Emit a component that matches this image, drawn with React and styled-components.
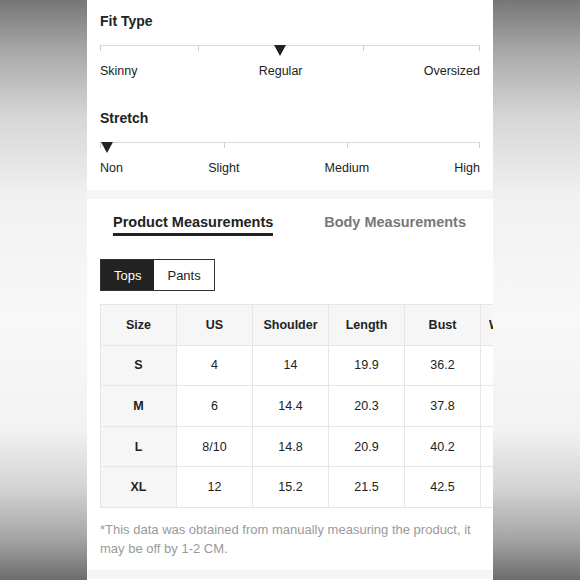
import React from "react";
import styled, { createGlobalStyle } from "styled-components";

const GlobalStyle = createGlobalStyle`
    html, body {
        margin: 0;
        padding: 0;
        height: 580px;
        overflow: hidden;
        background: linear-gradient(to bottom, #767676 0%, #a9a9a9 9%, #d6d6d6 20%, #f1f1f1 34%, #f8f8f8 55%, #f2f2f2 74%, #d4d4d4 84%, #a4a4a4 93%, #6c6c6c 100%);
        font-family: "Liberation Sans", Arial, sans-serif;
        color: #222;
    }
`

const Page = styled.div`
    width: 406px;
    height: 580px;
    margin: 0 auto;
    background: #f5f5f5;
    display: flex;
    flex-direction: column;
    gap: 9px;
    overflow: hidden;
`, Panel = styled.section`
    background: #fff;
    padding: ${p => p.$pad || "0 13px"};
    height: ${p => p.$h ? p.$h + "px" : "auto"};
    box-sizing: border-box;
    overflow: hidden;
    flex-shrink: 0;
`, Section = styled.div`
    margin-top: ${p => p.$top || 0}px;
`, Title = styled.h3`
    margin: 0;
    font-size: 14px;
    line-height: 18px;
    font-weight: bold;
    color: #222;
`, Track = styled.div`
    position: relative;
    margin-top: 15px;
    height: 17px;
    border-top: 1px solid #d9d9d9;
`, Tick = styled.span`
    position: absolute;
    top: 0;
    left: ${p => p.$left}px;
    width: 1px;
    height: 5px;
    background: #cfcfcf;
`, Pointer = styled.span`
    position: absolute;
    top: -1px;
    left: ${p => p.$left}px;
    width: 0;
    height: 0;
    border-left: 6px solid transparent;
    border-right: 6px solid transparent;
    border-top: 11px solid #222;
`, Labels = styled.div`
    display: flex;
    justify-content: space-between;
    font-size: 12.5px;
    line-height: 16px;
    color: #222;
`, Tabs = styled.div`
    display: flex;
    justify-content: space-between;
    padding: 14px 14px 0 13px;
`, Tab = styled.div`
    font-size: 14.5px;
    font-weight: bold;
    line-height: 18px;
    padding-bottom: 2px;
    color: ${p => p.$active ? "#222" : "#777"};
    border-bottom: 3px solid ${p => p.$active ? "#222" : "transparent"};
`, Toggle = styled.div`
    display: flex;
    margin-top: 23px;
    border: 1px solid #333;
    width: max-content;
`, ToggleButton = styled.div`
    height: 30px;
    padding: 0 13px;
    display: flex;
    align-items: center;
    font-size: 13px;
    background: ${p => p.$active ? "#222" : "#fff"};
    color: ${p => p.$active ? "#fff" : "#222"};
`, Table = styled.table`
    margin-top: 13px;
    border-collapse: collapse;
    table-layout: fixed;
    width: 430px;
    min-width: 430px;
    font-size: 12.5px;
`, Cell = styled.td`
    width: ${p => p.$w || 75}px;
    height: 39.6px;
    padding: 0;
    text-align: center;
    border: 1px solid #e6e6e6;
    background: ${p => p.$head ? "#f6f6f6" : "#fff"};
    font-weight: ${p => p.$head ? "bold" : "normal"};
    color: #222;
    white-space: nowrap;
    overflow: hidden;
`, Note = styled.p`
    margin: 12px 0 0;
    font-size: 13px;
    line-height: 19px;
    color: #9a9a9a;
`

const scales = [
    { title: "Fit Type", labels: ["Skinny", "Regular", "Oversized"], ticks: [0, 98, 263, 379], pointer: 174, top: 0 },
    { title: "Stretch", labels: ["Non", "Slight", "Medium", "High"], ticks: [0, 124, 247, 379], pointer: 1, top: 30 },
]

const headers = ["Size", "US", "Shoulder", "Length", "Bust", "Waist"]
const rows = [
    ["S", "4", "14", "19.9", "36.2"],
    ["M", "6", "14.4", "20.3", "37.8"],
    ["L", "8/10", "14.8", "20.9", "40.2"],
    ["XL", "12", "15.2", "21.5", "42.5"],
]

export default class App extends React.Component {
    render() {
        return (
            <>
                <GlobalStyle />
                <Page>
                    <Panel $h={190} $pad="12px 13px 0">
                        {scales.map(s => (
                            <Section key={s.title} $top={s.top}>
                                <Title>{s.title}</Title>
                                <Track>
                                    {s.ticks.map(t => <Tick key={t} $left={t} />)}
                                    <Pointer $left={s.pointer} />
                                </Track>
                                <Labels>
                                    {s.labels.map(l => <span key={l}>{l}</span>)}
                                </Labels>
                            </Section>
                        ))}
                    </Panel>
                    <Panel $h={371}>
                        <Tabs>
                            <Tab $active>Product Measurements</Tab>
                            <Tab>Body Measurements</Tab>
                        </Tabs>
                        <Toggle>
                            <ToggleButton $active>Tops</ToggleButton>
                            <ToggleButton>Pants</ToggleButton>
                        </Toggle>
                        <Table>
                            <thead>
                                <tr>
                                    {headers.map((h, i) => <Cell as="th" key={h} $head $w={i === 5 ? 49 : 75}>{h}</Cell>)}
                                </tr>
                            </thead>
                            <tbody>
                                {rows.map(r => (
                                    <tr key={r[0]}>
                                        {r.map((v, i) => <Cell key={i} $head={i === 0}>{v}</Cell>)}
                                        <Cell $w={49} />
                                    </tr>
                                ))}
                            </tbody>
                        </Table>
                        <Note>*This data was obtained from manually measuring the product, it may be off by 1-2 CM.</Note>
                    </Panel>
                    <Panel $h={40} />
                </Page>
            </>
        )
    }
}
